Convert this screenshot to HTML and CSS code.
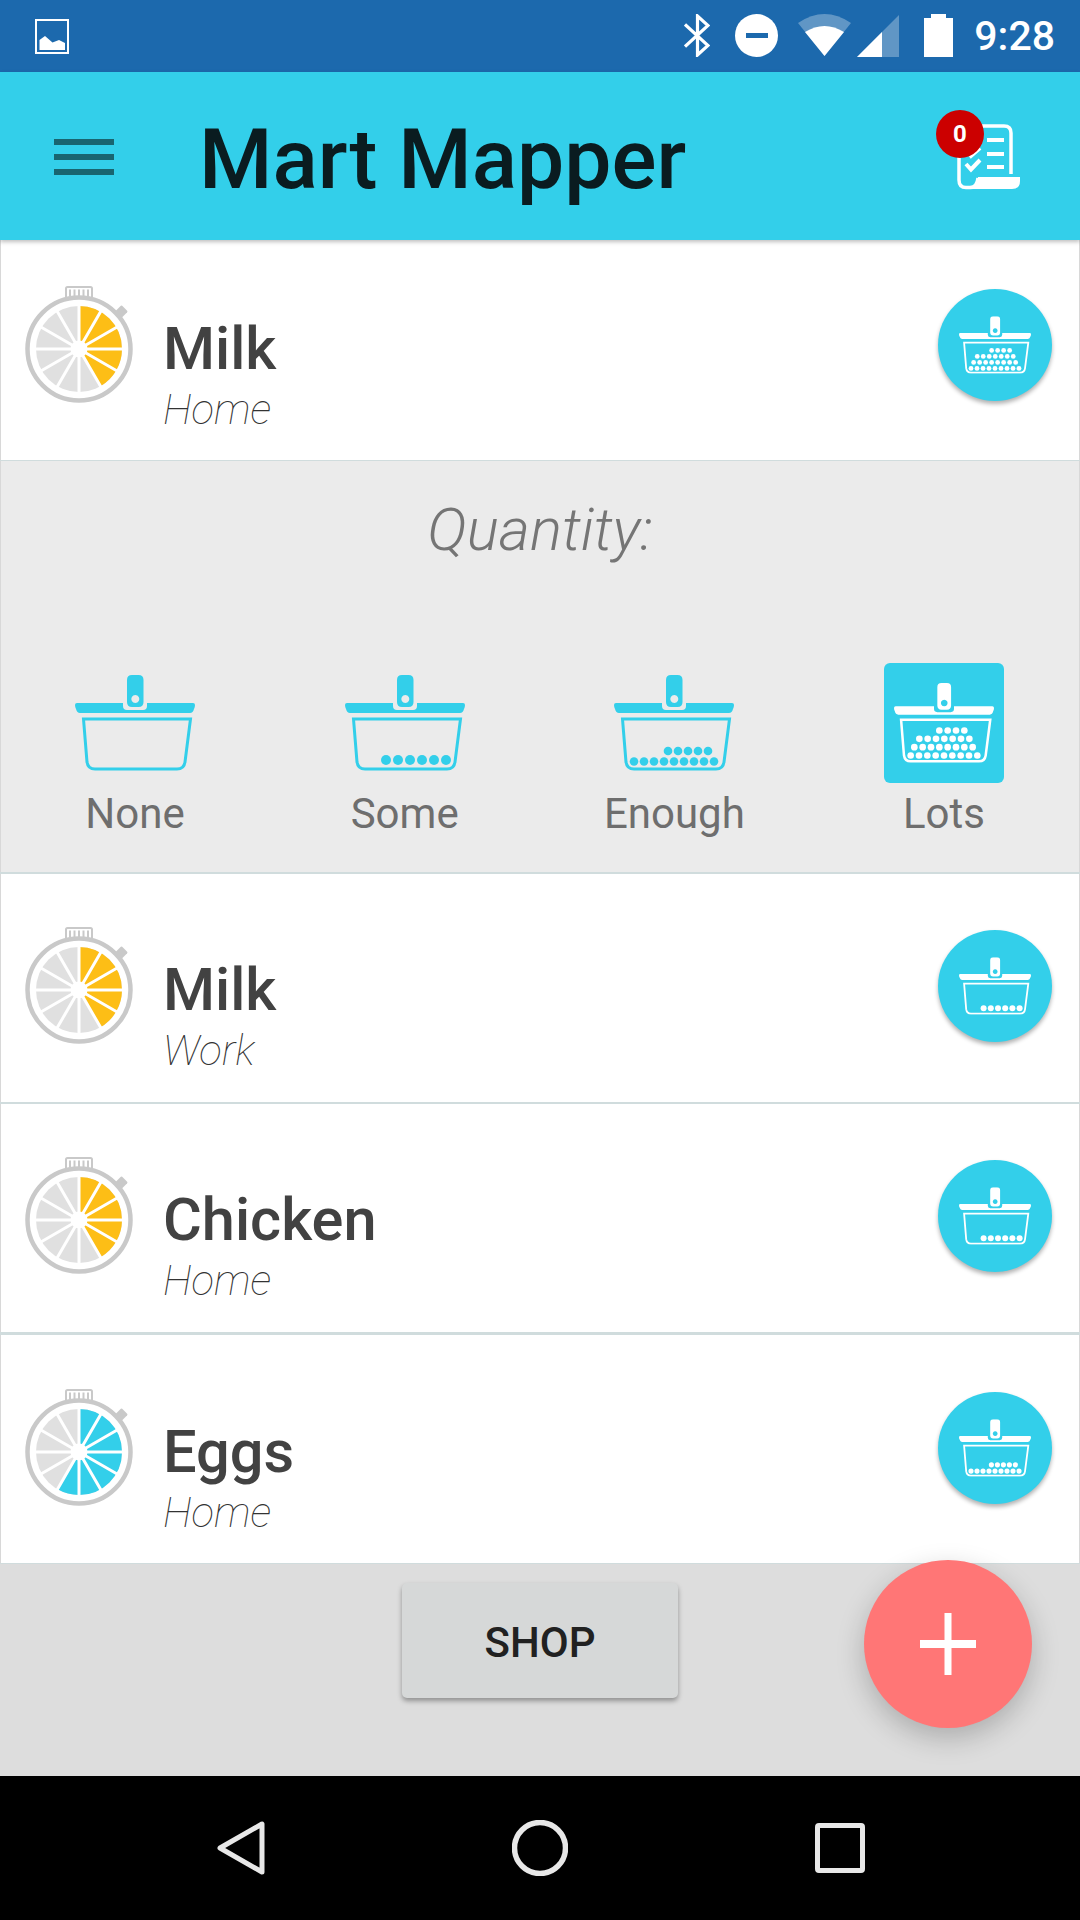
FILE: index.html
```html
<!DOCTYPE html>
<html lang="en">
<head>
  <meta charset="UTF-8" />
  <title>Mart Mapper</title>
  <link rel="stylesheet" href="styles.css">
</head>
<body>
  <!-- shared icons -->
  <svg class="defs" aria-hidden="true">
    <symbol id="basket" viewBox="0 0 120 96">
      <path fill-rule="evenodd" d="M57 0h6.500q5 0 5 5v22q0 5-5 5H57q-5 0-5-5V5q0-5 5-5zM60.300 20a4 4 0 1 0 .01 0z"/>
      <path d="M2 28H48V31Q48 35 52 35H68Q72 35 72 31V28H118Q120 28 120 30Q120 32 119 34Q118 38 115 38H5Q2 38 1 34Q0 32 0 30Q0 28 2 28Z"/>
      <path fill="none" stroke="currentColor" stroke-width="3" d="M8.500 44H115.500L110 87Q109 94 102 94H20Q13 94 12 87Z"/>
    </symbol>
    <symbol id="basket-none" viewBox="0 0 120 96">
      <use href="#basket"/>
    </symbol>
    <symbol id="basket-some" viewBox="0 0 120 96">
      <use href="#basket"/>
      <circle cx="41" cy="85" r="5"/><circle cx="53" cy="85" r="5"/><circle cx="65" cy="85" r="5"/><circle cx="77" cy="85" r="5"/><circle cx="89" cy="85" r="5"/><circle cx="101" cy="85" r="5"/>
    </symbol>
    <symbol id="basket-enough" viewBox="0 0 120 96">
      <use href="#basket"/>
      <circle cx="54" cy="76" r="4.300"/><circle cx="64" cy="76" r="4.300"/><circle cx="74" cy="76" r="4.300"/><circle cx="84" cy="76" r="4.300"/><circle cx="94" cy="76" r="4.300"/>
      <circle cx="20" cy="86.500" r="4.300"/><circle cx="30" cy="86.500" r="4.300"/><circle cx="40" cy="86.500" r="4.300"/><circle cx="50" cy="86.500" r="4.300"/><circle cx="60" cy="86.500" r="4.300"/><circle cx="70" cy="86.500" r="4.300"/><circle cx="80" cy="86.500" r="4.300"/><circle cx="90" cy="86.500" r="4.300"/><circle cx="100" cy="86.500" r="4.300"/>
    </symbol>
    <symbol id="basket-lots" viewBox="0 0 120 96">
      <use href="#basket"/>
      <circle cx="54.400" cy="57" r="4"/><circle cx="64.400" cy="57" r="4"/><circle cx="74.400" cy="57" r="4"/><circle cx="84.400" cy="57" r="4"/>
      <circle cx="30.400" cy="67" r="4"/><circle cx="40.400" cy="67" r="4"/><circle cx="50.400" cy="67" r="4"/><circle cx="60.400" cy="67" r="4"/><circle cx="70.400" cy="67" r="4"/><circle cx="80.400" cy="67" r="4"/><circle cx="90.400" cy="67" r="4"/>
      <circle cx="24.400" cy="77" r="4"/><circle cx="34.400" cy="77" r="4"/><circle cx="44.400" cy="77" r="4"/><circle cx="54.400" cy="77" r="4"/><circle cx="64.400" cy="77" r="4"/><circle cx="74.400" cy="77" r="4"/><circle cx="84.400" cy="77" r="4"/><circle cx="94.400" cy="77" r="4"/>
      <circle cx="20" cy="87" r="4"/><circle cx="30" cy="87" r="4"/><circle cx="40" cy="87" r="4"/><circle cx="50" cy="87" r="4"/><circle cx="60" cy="87" r="4"/><circle cx="70" cy="87" r="4"/><circle cx="80" cy="87" r="4"/><circle cx="90" cy="87" r="4"/><circle cx="100" cy="87" r="4"/>
    </symbol>
    <symbol id="watch" viewBox="0 0 108 118">
      <rect x="41" y="1" width="26" height="12" rx="1.500" fill="#fff" stroke="#c9c9c9" stroke-width="2"/>
      <path d="M45 3.500V10.500M49.500 3.500V10.500M54 3.500V10.500M58.500 3.500V10.500M63 3.500V10.500" stroke="#c9c9c9" stroke-width="2"/>
      <path d="M49 13H59V17H49Z" fill="#c9c9c9"/>
      <rect x="92" y="21" width="9" height="9" rx="1" transform="rotate(45 96.500 25.500)" fill="#c9c9c9"/>
      <circle cx="54" cy="63" r="51.500" fill="#fff" stroke="#c9c9c9" stroke-width="4.500"/>
      <circle cx="54" cy="63" r="43" fill="#e0e0e0"/>
      <circle class="watch-pie" cx="54" cy="63" r="21.500" pathLength="12" fill="none" stroke="currentColor" stroke-width="43" transform="rotate(-90 54 63)"/>
      <path d="M54 15V111M6 63H102M30 21.400L78 104.600M12.400 39L95.600 87M12.400 87L95.600 39M30 104.600L78 21.400" stroke="#fff" stroke-width="3"/>
      <circle cx="54" cy="63" r="8.500" fill="#fff"/>
    </symbol>
  </svg>

  <div class="screen">
    <div class="status-bar">
      <svg class="status-picture" width="34" height="35" viewBox="0 0 34 35">
        <rect x="1" y="1" width="32" height="33" fill="none" stroke="#fff" stroke-width="2"/>
        <path d="M4.500 21L10 17L17.500 23.500L24 21L30 24V31H4.500Z" fill="#fff"/>
      </svg>
      <div class="status-icons">
        <svg width="26" height="43" viewBox="0 0 26 43">
          <path d="M1 10.500L24 31.500L13.500 41V2L24 11.500L1 32.500" fill="none" stroke="#fff" stroke-width="3.200"/>
        </svg>
        <svg class="status-dnd" width="43" height="43" viewBox="0 0 43 43">
          <circle cx="21.500" cy="21.500" r="21.500" fill="#fff"/>
          <rect x="11" y="19" width="22" height="5" fill="#1c69ad"/>
        </svg>
        <svg class="status-wifi" width="54" height="43" viewBox="0 0 54 43">
          <path d="M0 9Q26.500 -9 53 9L26.500 42Z" fill="#fff" opacity=".3"/>
          <path d="M7 18Q26.500 6 46 18L26.500 42Z" fill="#fff"/>
        </svg>
        <svg class="status-signal" width="42" height="42" viewBox="0 0 42 42">
          <path d="M42 0V42H0Z" fill="#fff" opacity=".3"/>
          <path d="M25 17V42H0Z" fill="#fff"/>
        </svg>
        <svg class="status-battery" width="29" height="43" viewBox="0 0 29 43">
          <path d="M7 0H22V4H29V43H0V4H7Z" fill="#fff"/>
        </svg>
        <span class="status-time">9:28</span>
      </div>
    </div>

    <header class="toolbar">
      <div class="menu-icon"><span></span><span></span><span></span></div>
      <h1>Mart Mapper</h1>
      <div class="list-icon">
        <svg width="64" height="66" viewBox="0 0 64 66">
          <path d="M3 10V56Q3 63.500 10 63.500H14Q21 63.500 22 54M55 50V9Q55 2 48 2H14" fill="none" stroke="#fff" stroke-width="3.500"/>
          <path d="M22 53H64V57Q64 65 56 65H14Q21 62 22 53Z" fill="#fff"/>
          <path d="M31 16H48M31 30H48M31 43H48M10 40L15 45.500L24 36M10 26L15 32L24 24" fill="none" stroke="#fff" stroke-width="4"/>
        </svg>
        <span class="badge">0</span>
      </div>
    </header>

    <main class="list">
      <div class="item item-first">
        <svg class="watch watch-week"><use href="#watch"/></svg>
        <div class="item-text">
          <div class="item-name">Milk</div>
          <div class="item-place">Home</div>
        </div>
        <div class="basket-btn"><svg><use href="#basket-lots"/></svg></div>
      </div>

      <section class="quantity">
        <div class="quantity-title">Quantity:</div>
        <div class="quantity-options">
          <div class="option">
            <div class="option-icon"><svg class="basket-lg"><use href="#basket-none"/></svg></div>
            <span>None</span>
          </div>
          <div class="option">
            <div class="option-icon"><svg class="basket-lg"><use href="#basket-some"/></svg></div>
            <span>Some</span>
          </div>
          <div class="option">
            <div class="option-icon"><svg class="basket-lg"><use href="#basket-enough"/></svg></div>
            <span>Enough</span>
          </div>
          <div class="option">
            <div class="option-icon selected"><svg class="basket-md"><use href="#basket-lots"/></svg></div>
            <span>Lots</span>
          </div>
        </div>
      </section>

      <div class="item">
        <svg class="watch watch-week"><use href="#watch"/></svg>
        <div class="item-text">
          <div class="item-name">Milk</div>
          <div class="item-place">Work</div>
        </div>
        <div class="basket-btn"><svg><use href="#basket-some"/></svg></div>
      </div>

      <div class="item item-wide-gap">
        <svg class="watch watch-week"><use href="#watch"/></svg>
        <div class="item-text">
          <div class="item-name">Chicken</div>
          <div class="item-place">Home</div>
        </div>
        <div class="basket-btn"><svg><use href="#basket-some"/></svg></div>
      </div>

      <div class="item">
        <svg class="watch watch-fresh"><use href="#watch"/></svg>
        <div class="item-text">
          <div class="item-name">Eggs</div>
          <div class="item-place">Home</div>
        </div>
        <div class="basket-btn"><svg><use href="#basket-enough"/></svg></div>
      </div>
    </main>

    <div class="footer">
      <button class="shop-btn">SHOP</button>
      <div class="fab">
        <svg width="56" height="62" viewBox="0 0 56 62"><path d="M24.500 0H31.500V27H56V35H31.500V62H24.500V35H0V27H24.500Z" fill="#fff"/></svg>
      </div>
    </div>

    <nav class="nav-bar">
      <svg width="48" height="54" viewBox="0 0 48 54">
        <path d="M45 3V51L3 27Z" fill="none" stroke="#e8e8e8" stroke-width="5" stroke-linejoin="round"/>
      </svg>
      <svg width="56" height="56" viewBox="0 0 56 56">
        <circle cx="28" cy="28" r="25.500" fill="none" stroke="#e8e8e8" stroke-width="5.500"/>
      </svg>
      <svg width="50" height="50" viewBox="0 0 50 50">
        <rect x="2.500" y="2.500" width="45" height="45" rx="1.500" fill="none" stroke="#e8e8e8" stroke-width="5"/>
      </svg>
    </nav>
  </div>
</body>
</html>
```

FILE: styles.css
```css
* {
  box-sizing: border-box;
}
html, body {
  margin: 0;
  padding: 0;
}
body {
  font-family: Roboto, "Liberation Sans", sans-serif;
  background: #ddd;
}
.defs {
  position: absolute;
  width: 0;
  height: 0;
}
.screen {
  position: relative;
  width: 1080px;
  height: 1920px;
  display: flex;
  flex-direction: column;
  overflow: hidden;
}

/* status bar */
.status-bar {
  height: 72px;
  flex: none;
  background: #1c69ad;
  display: flex;
  align-items: center;
  justify-content: space-between;
  padding: 0 25px 0 35px;
}
.status-bar svg {
  display: block;
}
.status-icons {
  display: flex;
  align-items: center;
  height: 72px;
  padding-bottom: 1px;
  color: #fff;
}
.status-dnd { margin-left: 25px; }
.status-wifi { margin-left: 20px; }
.status-signal { margin-left: 5px; }
.status-battery { margin-left: 25px; }
.status-time {
  margin-left: 21px;
  font-size: 41px;
  font-weight: 500;
  line-height: 72px;
}

/* toolbar */
.toolbar {
  height: 168px;
  flex: none;
  background: #33cfea;
  display: flex;
  align-items: center;
  padding: 0 60px 0 54px;
  position: relative;
  z-index: 2;
  box-shadow: 0 2px 4px rgba(0,0,0,0.25);
}
.menu-icon {
  width: 60px;
  display: flex;
  flex-direction: column;
  gap: 9px;
  margin-top: 2px;
}
.menu-icon span {
  height: 6px;
  background: #196570;
}
.toolbar h1 {
  flex: 1;
  margin: 8px 0 0 85px;
  font-size: 84px;
  font-weight: 500;
  color: #0a1c20;
  line-height: 100px;
}
.list-icon {
  position: relative;
  width: 64px;
  height: 66px;
  margin-top: 1px;
}
.list-icon svg {
  display: block;
}
.badge {
  position: absolute;
  left: -20px;
  top: -14px;
  width: 48px;
  height: 48px;
  border-radius: 50%;
  background: #cc0000;
  color: #fff;
  font-size: 24px;
  font-weight: 700;
  line-height: 48px;
  text-align: center;
}

/* list */
.list {
  height: 1324px;
  flex: none;
  display: flex;
  flex-direction: column;
  background: #d0dcdd;
}
.item {
  height: 228px;
  flex: none;
  display: flex;
  align-items: center;
  background: #fff;
  border-left: 1px solid #d8d8d8;
  border-right: 1px solid #d8d8d8;
  padding: 0 27px 4px 24px;
  margin-bottom: 2px;
}
.item-first {
  height: 220px;
  margin-bottom: 1px;
  padding-bottom: 11px;
}
.item-wide-gap {
  margin-bottom: 3px;
}
.item:last-child {
  margin-bottom: 0;
  padding-bottom: 2px;
}
.watch {
  width: 108px;
  height: 118px;
  flex: none;
  filter: blur(0.5px);
}
.watch-pie {
  stroke-dasharray: var(--slices) 12;
}
.watch-week {
  color: #fdbe16;
  --slices: 5;
}
.watch-fresh {
  color: #33cfea;
  --slices: 7;
}
.item-text {
  flex: 1;
  margin-left: 30px;
  padding-top: 62px;
  color: #424242;
}
.item-name {
  font-size: 59.5px;
  font-weight: 500;
  line-height: 64px;
}
.item-place {
  font-size: 42px;
  font-weight: 100;
  font-style: italic;
  line-height: 50px;
  margin-top: 4px;
  color: #333;
}
.basket-btn {
  width: 114px;
  height: 112px;
  border-radius: 50%;
  background: #33cfea;
  color: #fff;
  box-shadow: 0 3px 4px rgba(0,0,0,0.3);
  display: flex;
  align-items: center;
  justify-content: center;
}
.basket-btn svg {
  width: 72px;
  height: 58px;
  fill: currentColor;
}

/* quantity panel */
.quantity {
  height: 411px;
  flex: none;
  background: #ebebeb;
  border-left: 1px solid #d8d8d8;
  border-right: 1px solid #d8d8d8;
  margin-bottom: 2px;
}
.quantity-title {
  text-align: center;
  font-size: 60px;
  font-weight: 300;
  font-style: italic;
  color: #757575;
  line-height: 66px;
  padding-top: 36px;
}
.quantity-options {
  display: grid;
  grid-template-columns: repeat(4, 120px);
  justify-content: space-between;
  padding: 0 75px 0 74px;
  margin-top: 100px;
}
.option {
  display: flex;
  flex-direction: column;
  align-items: center;
  font-size: 42px;
  color: #6e6e6e;
  white-space: nowrap;
  line-height: 48px;
}
.option-icon {
  width: 120px;
  height: 120px;
  color: #33cfea;
  display: flex;
  align-items: flex-end;
  justify-content: center;
  margin-bottom: 7px;
}
.option-icon.selected {
  background: #33cfea;
  color: #fff;
  border-radius: 6px;
  align-items: center;
}
.basket-lg {
  width: 120px;
  height: 96px;
  margin-bottom: 12px;
  fill: currentColor;
}
.basket-md {
  width: 100px;
  height: 80px;
  fill: currentColor;
}

/* bottom */
.footer {
  height: 212px;
  flex: none;
  background: #ddd;
  display: flex;
  justify-content: center;
  padding-top: 19px;
}
.shop-btn {
  width: 276px;
  height: 115px;
  border: none;
  border-radius: 5px;
  padding: 3px 0 0;
  background: #d6d8d8;
  color: #212121;
  font-family: inherit;
  font-size: 42px;
  font-weight: 500;
  box-shadow: 0 3px 5px rgba(0,0,0,0.35);
}
.fab {
  position: absolute;
  left: 864px;
  top: 1560px;
  width: 168px;
  height: 168px;
  border-radius: 50%;
  background: #ff7676;
  box-shadow: 0 10px 28px rgba(0,0,0,0.22);
  display: flex;
  align-items: center;
  justify-content: center;
  z-index: 3;
}
.fab svg {
  display: block;
}
.nav-bar {
  flex: 1;
  background: #000;
  display: flex;
  align-items: center;
  justify-content: space-between;
  padding: 0 215px 0 217px;
}
```
